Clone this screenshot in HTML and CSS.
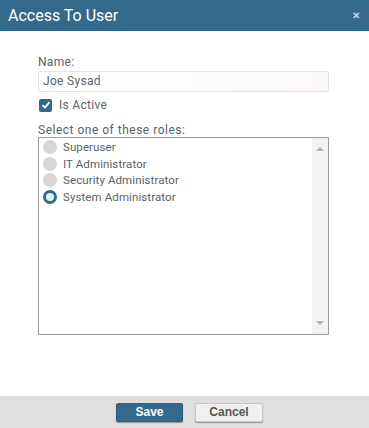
FILE: index.html
```html
<!DOCTYPE html>
<html lang="en">
<head>
  <meta charset="UTF-8">
  <title>Access To User</title>
  <link rel="stylesheet" href="styles.css">
</head>
<body>
  <div class="dialog">
    <div class="dialog-header">
      <span class="dialog-title">Access To User</span>
      <span class="dialog-close">&#x2715;</span>
    </div>

    <div class="dialog-body">
      <label class="field-label">Name:</label>
      <div class="text-input">Joe Sysad</div>

      <div class="check-row">
        <span class="checkbox">
          <svg width="10" height="10" viewBox="0 0 10 10"><path d="M1.5 5.2 L4 7.5 L8.5 2.2" fill="none" stroke="#fff" stroke-width="1.8"/></svg>
        </span>
        <span>Is Active</span>
      </div>

      <label class="field-label roles-label">Select one of these roles:</label>
      <div class="role-list">
        <div class="role-items">
          <div class="role"><span class="radio"></span>Superuser</div>
          <div class="role"><span class="radio"></span>IT Administrator</div>
          <div class="role"><span class="radio"></span>Security Administrator</div>
          <div class="role"><span class="radio selected"></span>System Administrator</div>
        </div>
        <div class="scrollbar">
          <span class="arrow up"></span>
          <span class="arrow down"></span>
        </div>
      </div>
    </div>

    <div class="dialog-footer">
      <button class="btn btn-primary">Save</button>
      <button class="btn">Cancel</button>
    </div>
  </div>
</body>
</html>
```

FILE: styles.css
```css
html, body {
  margin: 0;
  padding: 0;
  height: 100%;
  background: #fff;
  font-family: Roboto, "Liberation Sans", sans-serif;
}

.dialog {
  height: 100%;
  display: flex;
  flex-direction: column;
}

.dialog-header {
  height: 31px;
  background-color: #336a8c;
  color: #fff;
  display: flex;
  align-items: center;
  justify-content: space-between;
  padding: 0 9px 0 8px;
}

.dialog-title {
  font-size: 16px;
}

.dialog-close {
  font-size: 10px;
  font-weight: bold;
  color: #c9d9e4;
}

.dialog-body {
  flex: 1;
  padding: 24px 40px 0 38px;
  font-size: 12px;
  color: #5c6166;
  letter-spacing: 0.3px;
}

.field-label {
  display: block;
  line-height: 14px;
}

.text-input {
  margin-top: 2px;
  height: 19px;
  line-height: 19px;
  border: 1px solid #e3e3e3;
  border-radius: 2px;
  padding: 0 4px;
  background: linear-gradient(to right, #fff, #fcf8fb);
}

.check-row {
  display: flex;
  align-items: center;
  gap: 7px;
  margin-top: 6px;
  margin-left: 1px;
  height: 14px;
}

.checkbox {
  width: 13px;
  height: 13px;
  border-radius: 2px;
  background-color: #336a8c;
  display: flex;
  align-items: center;
  justify-content: center;
}

.roles-label {
  margin-top: 11px;
  letter-spacing: 0.5px;
}

.role-list {
  margin-top: 0;
  height: 196px;
  border: 1px solid #999;
  display: flex;
}

.role-items {
  flex: 1;
  padding: 1px 4px;
}

.role {
  display: flex;
  align-items: center;
  gap: 6px;
  height: 16.5px;
  font-size: 11.5px;
  letter-spacing: 0.1px;
}

.radio {
  width: 14px;
  height: 14px;
  border-radius: 50%;
  background-color: #d6d6d6;
  box-sizing: border-box;
}

.radio.selected {
  background-color: #dff4f8;
  border: 3px solid #336a8c;
}

.scrollbar {
  width: 16px;
  background-color: #f5f0f3;
  display: flex;
  flex-direction: column;
  justify-content: space-between;
  align-items: center;
  padding: 9px 0 9px;
}

.arrow {
  width: 0;
  height: 0;
  border-left: 4px solid transparent;
  border-right: 4px solid transparent;
}

.arrow.up {
  border-bottom: 4px solid #b0b0b0;
}

.arrow.down {
  border-top: 4px solid #b0b0b0;
}

.dialog-footer {
  height: 32px;
  background-color: #dfdfdf;
  display: flex;
  justify-content: center;
  align-items: center;
  gap: 12px;
  padding-left: 10px;
}

.btn {
  width: 68px;
  height: 19px;
  padding: 0;
  font-family: "Liberation Sans", Arial, sans-serif;
  font-size: 12px;
  font-weight: bold;
  color: #555;
  background-color: #f0f0f0;
  border: 1px solid #c8c8c8;
  border-radius: 2px;
  box-shadow: 0 1px 1px rgba(0, 0, 0, 0.35);
  cursor: pointer;
}

.btn-primary {
  width: 67px;
  color: #fff;
  background-color: #336a8c;
  border-color: #2c5d7b;
}
```
